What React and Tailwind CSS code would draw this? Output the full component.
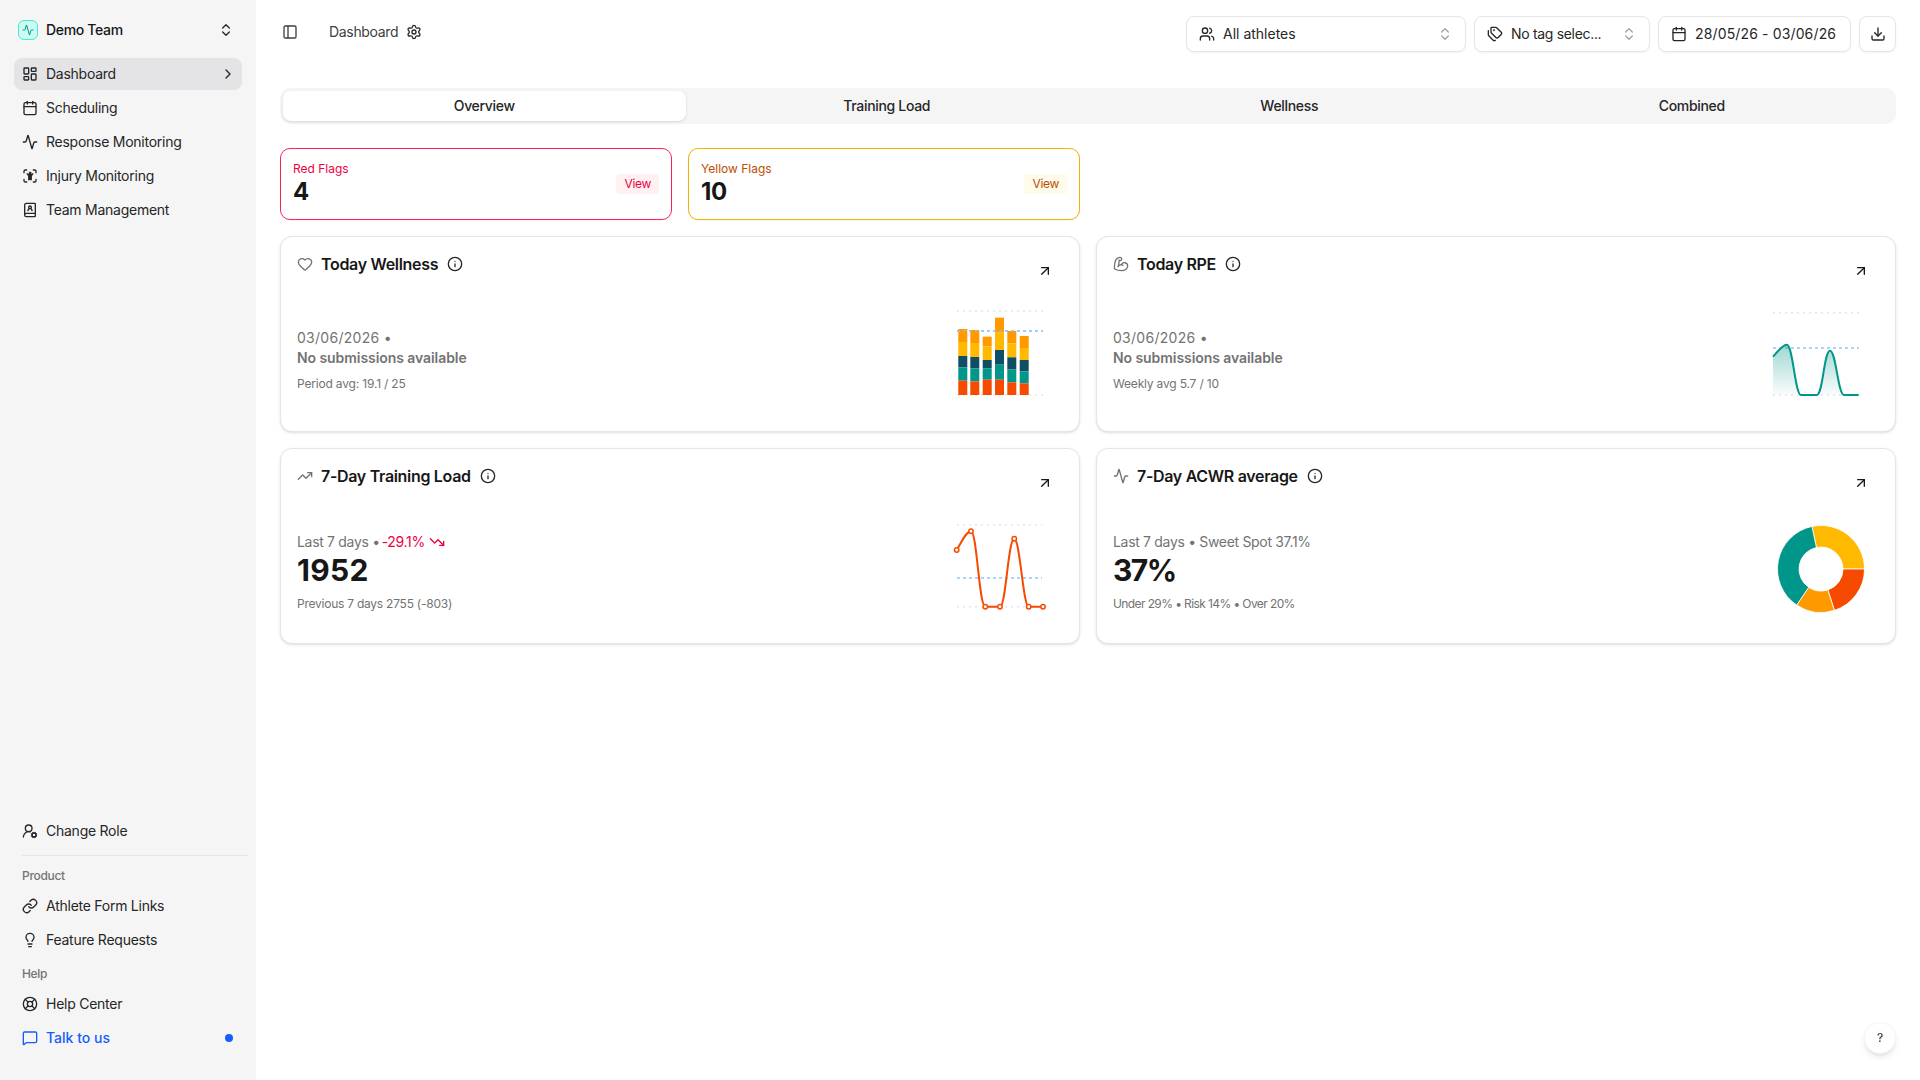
import {
  Activity, ArrowUpRight, BicepsFlexed, BookUser, Calendar, ChevronRight, ChevronsUpDown, Download, Heart, Info,
  LayoutDashboard, LifeBuoy, Lightbulb, Link, MessageSquare, PanelLeft, Settings, Tags, TrendingDown, TrendingUp,
  UserRoundCog, Users,
} from "lucide-react";

const bars = [
  { x: 958.3, ys: [597, 636, 678, 712, 752, 795] },
  { x: 970.3, ys: [600, 639, 681, 715, 754, 795] },
  { x: 982.7, ys: [620, 649, 690, 715, 749, 795] },
  { x: 995, ys: [563, 608, 660, 704, 749, 795] },
  { x: 1007.3, ys: [603, 640, 682, 718, 757, 795] },
  { x: 1019.7, ys: [618, 654, 690, 724, 760, 795] },
];
const barColors = ["#fe9a00", "#ffb900", "#104e64", "#009689", "#f54a00"];

function InjuryIcon({ className }) {
  return (
    <svg viewBox="0 0 24 24" fill="none" stroke="currentColor" strokeWidth="2" strokeLinecap="round" strokeLinejoin="round" className={className}>
      <path d="M3 7V5a2 2 0 0 1 2-2h2" />
      <path d="M17 3h2a2 2 0 0 1 2 2v2" />
      <path d="M21 17v2a2 2 0 0 1-2 2h-2" />
      <path d="M7 21H5a2 2 0 0 1-2-2v-2" />
      <circle cx="12" cy="7.5" r="1.6" fill="currentColor" strokeWidth="1" />
      <path d="M7.5 8.5 10 12v5.5h4V12l2.500-3.500" fill="currentColor" strokeWidth="1.6" />
    </svg>
  );
}

function Grid({ x1, x2, top, mid, bottom }) {
  return (
    <>
      <line x1={x1} x2={x2} y1={top} y2={top} stroke="#e5e5e5" strokeWidth="1.5" strokeDasharray="2 4" />
      <line x1={x1} x2={x2} y1={bottom} y2={bottom} stroke="#e5e5e5" strokeWidth="1.5" strokeDasharray="2 4" />
      <line x1={x1} x2={x2} y1={mid} y2={mid} stroke="#93c5fd" strokeWidth="1.7" strokeDasharray="3 3" />
    </>
  );
}

function BarsChart() {
  return (
    <svg viewBox="952 305 96 96" className="w-24 h-24 mr-[15px] shrink-0 overflow-visible">
      <Grid x1={957} x2={1043} top={311} mid={331} bottom={395} />
      {bars.map((b) =>
        barColors.map((c, i) => (
          <rect
            key={b.x + c}
            x={b.x}
            y={130 + b.ys[i] / 3}
            width="9"
            height={(b.ys[i + 1] - b.ys[i]) / 3}
            fill={c}
          />
        ))
      )}
      <line x1={957} x2={1043} y1={331} y2={331} stroke="#93c5fd" strokeWidth="1.7" strokeDasharray="3 3" opacity="0.7" />
    </svg>
  );
}

function RpeChart() {
  const line =
    "M1773 356.7 C1778 351 1783 344.7 1786.7 344.7 C1793 344.7 1795 395 1801 395 L1816.7 395 C1823 395 1824 350.7 1830 350.7 C1836 350.7 1838 395 1844 395 L1858.7 395";
  return (
    <svg viewBox="1768 305 96 96" className="w-24 h-24 mr-[15px] shrink-0 overflow-visible">
      <defs>
        <linearGradient id="rpe" x1="0" x2="0" y1="0" y2="1">
          <stop offset="0" stopColor="#009689" stopOpacity="0.38" />
          <stop offset="1" stopColor="#009689" stopOpacity="0.02" />
        </linearGradient>
      </defs>
      <Grid x1={1773} x2={1859} top={312.7} mid={348} bottom={395} />
      <path d={`${line} L1773 395 Z`} fill="url(#rpe)" />
      <path d={line} fill="none" stroke="#009689" strokeWidth="2" />
    </svg>
  );
}

function LoadChart() {
  const pts = [[956.7, 550], [971, 531.3], [985.3, 606.7], [1000, 606.7], [1014.3, 538.7], [1028.7, 606.7], [1043, 606.7]];
  return (
    <svg viewBox="952 517 96 96" className="w-24 h-24 mr-[15px] shrink-0 overflow-visible">
      <Grid x1={957} x2={1042} top={524.7} mid={578} bottom={606.7} />
      <path
        d="M956.7 550 C961 543 966 531.3 971 531.3 C977 531.3 979 606.7 985.3 606.7 L1000 606.7 C1006 606.7 1008 538.7 1014.3 538.7 C1020 538.7 1023 606.7 1028.7 606.7 L1043 606.7"
        fill="none"
        stroke="#f54a00"
        strokeWidth="2"
      />
      {pts.map(([x, y]) => (
        <circle key={x} cx={x} cy={y} r="2.2" fill="#fff" stroke="#f54a00" strokeWidth="1.5" />
      ))}
    </svg>
  );
}

function arc(a0, a1) {
  const cx = 1821, cy = 569, R = 43.5, r = 22;
  const p = (rad, a) => {
    const t = ((a - 90) * Math.PI) / 180;
    return `${(cx + rad * Math.cos(t)).toFixed(2)} ${(cy + rad * Math.sin(t)).toFixed(2)}`;
  };
  const large = a1 - a0 > 180 ? 1 : 0;
  return `M${p(R, a0)} A${R} ${R} 0 ${large} 1 ${p(R, a1)} L${p(r, a1)} A${r} ${r} 0 ${large} 0 ${p(r, a0)} Z`;
}

function Donut() {
  const slices = [
    [-12, 90, "#ffb900"],
    [90, 162, "#f54a00"],
    [162, 214, "#fe9a00"],
    [214, 348, "#009689"],
  ];
  return (
    <svg viewBox="1768 517 96 96" className="w-24 h-24 mr-[15px] shrink-0 overflow-visible">
      {slices.map(([a, b, c]) => (
        <path key={c} d={arc(a, b)} fill={c} stroke="#fff" strokeWidth="0.8" />
      ))}
    </svg>
  );
}

function NavItem({ icon: Icon, label, active, blue, children }) {
  return (
    <div
      className={`h-8 flex items-center gap-2 pl-2 pr-2 rounded-lg text-sm ${active ? "bg-zinc-200" : ""} ${
        blue ? "text-blue-600 font-medium tracking-normal" : "text-neutral-800 tracking-[-0.018em]"
      }`}
    >
      <Icon className="w-4 h-4 shrink-0" strokeWidth={2} />
      <span className="flex-1">{label}</span>
      {children}
    </div>
  );
}

function Sidebar() {
  return (
    <aside className="w-64 shrink-0 h-full bg-neutral-100 flex flex-col justify-between px-[14px] pt-[14px] pb-[26px]">
      <div>
        <div className="h-8 flex items-center gap-2 pl-1 pr-2 mb-3">
          <div className="w-5 h-5 rounded-md bg-teal-100 border border-teal-300 flex items-center justify-center">
            <Activity className="w-3 h-3 text-teal-600" />
          </div>
          <span className="flex-1 text-sm font-medium text-neutral-900">Demo Team</span>
          <ChevronsUpDown className="w-4 h-4 text-neutral-800" />
        </div>
        <nav className="flex flex-col gap-0.5">
          <NavItem icon={LayoutDashboard} label="Dashboard" active>
            <ChevronRight className="w-4 h-4 -mr-0.5 text-neutral-800" />
          </NavItem>
          <NavItem icon={Calendar} label="Scheduling" />
          <NavItem icon={Activity} label="Response Monitoring" />
          <NavItem icon={InjuryIcon} label="Injury Monitoring" />
          <NavItem icon={BookUser} label="Team Management" />
        </nav>
      </div>
      <div className="flex flex-col">
        <NavItem icon={UserRoundCog} label="Change Role" />
        <div className="border-t border-neutral-200 mt-2 ml-2 -mr-1.5" />
        <div className="h-[34px] pt-3 pl-2 text-xs font-medium text-neutral-500">Product</div>
        <div className="flex flex-col gap-0.5">
          <NavItem icon={Link} label="Athlete Form Links" />
          <NavItem icon={Lightbulb} label="Feature Requests" />
        </div>
        <div className="h-8 pt-2.5 pl-2 text-xs font-medium text-neutral-500">Help</div>
        <div className="flex flex-col gap-0.5">
          <NavItem icon={LifeBuoy} label="Help Center" />
          <NavItem icon={MessageSquare} label="Talk to us" blue>
            <span className="w-2 h-2 rounded-full bg-blue-600 mr-px" />
          </NavItem>
        </div>
      </div>
    </aside>
  );
}

function Picker({ icon: Icon, label, width, tracking = "", chevron = true }) {
  return (
    <button className={`h-9 ${width} flex items-center gap-2 px-3 bg-white border border-neutral-200 rounded-lg shadow-xs text-sm text-neutral-800`}>
      <Icon className="w-4 h-4 shrink-0" />
      <span className={`flex-1 text-left whitespace-nowrap ${tracking}`}>{label}</span>
      {chevron && <ChevronsUpDown className="w-4 h-4 text-neutral-400 shrink-0" />}
    </button>
  );
}

function Header() {
  return (
    <header className="h-[52px] flex items-start justify-between pt-4">
      <div className="flex items-center h-8 text-sm text-neutral-700">
        <PanelLeft className="w-4 h-4 ml-0.5 text-neutral-700" />
        <span className="ml-[31px]">Dashboard</span>
        <Settings className="w-4 h-4 ml-2 text-neutral-800" />
      </div>
      <div className="flex gap-2">
        <Picker icon={Users} label="All athletes" width="w-[280px]" tracking="tracking-normal" />
        <Picker icon={Tags} label="No tag selec..." width="w-[176px]" />
        <Picker icon={Calendar} label="28/05/26 - 03/06/26" width="w-[193px]" tracking="tracking-[0.01em]" chevron={false} />
        <button className="h-9 w-[37px] flex items-center justify-center bg-white border border-neutral-200 rounded-lg shadow-xs text-neutral-800">
          <Download className="w-4 h-4" />
        </button>
      </div>
    </header>
  );
}

function Tabs() {
  return (
    <div className="mt-9 h-9 bg-neutral-100 rounded-[10px] p-[3px] grid grid-cols-4 text-sm font-medium text-neutral-800">
      <div className="bg-white rounded-lg shadow-sm flex items-center justify-center">Overview</div>
      <div className="flex items-center justify-center">Training Load</div>
      <div className="flex items-center justify-center">Wellness</div>
      <div className="flex items-center justify-center">Combined</div>
    </div>
  );
}

function FlagCard({ label, value, border, text, badge }) {
  return (
    <div className={`h-[72px] bg-white border ${border} rounded-[10px] shadow-xs px-3 flex items-center justify-between`}>
      <div>
        <div className={`text-xs leading-4 tracking-normal -mt-px mb-px ${text}`}>{label}</div>
        <div className="text-2xl leading-7 font-bold text-neutral-900">{value}</div>
      </div>
      <span className={`h-5 px-2 rounded flex items-center text-xs ${text} ${badge}`}>View</span>
    </div>
  );
}

function Card({ icon: Icon, title, chart, children }) {
  return (
    <div className="h-[196px] bg-white border border-neutral-200 rounded-xl shadow-sm p-4 flex flex-col">
      <div className="h-[22px] flex items-center justify-between">
        <div className="flex items-center gap-2">
          <Icon className="w-4 h-4 text-neutral-500" />
          <span className="text-base font-semibold text-neutral-900">{title}</span>
          <Info className="w-4 h-4 ml-px text-neutral-800" />
        </div>
        <ArrowUpRight className="w-4 h-4 mt-3.5 mr-2.5 text-neutral-900" />
      </div>
      <div className="flex-1 mt-4 flex items-center justify-between">
        {children}
        {chart}
      </div>
    </div>
  );
}

function TodayText({ note }) {
  return (
    <div className="pt-[14px]">
      <div className="text-sm leading-5 tracking-[0.02em] text-neutral-500">03/06/2026 •</div>
      <div className="text-sm leading-5 font-semibold tracking-[-0.005em] text-neutral-500">No submissions available</div>
      <div className="mt-2 text-xs leading-4 tracking-[-0.015em] text-neutral-500">{note}</div>
    </div>
  );
}

function StatText({ top, value, note, noteTracking = "tracking-[-0.02em]" }) {
  return (
    <div className="pt-[14px]">
      <div className="text-sm leading-5 text-neutral-500 flex items-center gap-1">{top}</div>
      <div className="text-[30px] leading-9 font-bold text-neutral-900">{value}</div>
      <div className={`mt-2 mb-px text-xs leading-4 text-neutral-500 ${noteTracking}`}>{note}</div>
    </div>
  );
}

export default function App() {
  return (
    <div className="h-screen flex overflow-hidden bg-white font-['Inter',sans-serif] tracking-[-0.02em]">
      <Sidebar />
      <main className="flex-1 px-6">
        <Header />
        <Tabs />
        <div className="mt-6 grid grid-cols-4 gap-4">
          <FlagCard label="Red Flags" value="4" border="border-rose-500" text="text-rose-600" badge="bg-rose-50" />
          <FlagCard label="Yellow Flags" value="10" border="border-[#f5b000]" text="text-amber-700" badge="bg-amber-50" />
        </div>
        <div className="mt-4 grid grid-cols-2 gap-4">
          <Card icon={Heart} title="Today Wellness" chart={<BarsChart />}>
            <TodayText note="Period avg: 19.1 / 25" />
          </Card>
          <Card icon={BicepsFlexed} title="Today RPE" chart={<RpeChart />}>
            <TodayText note="Weekly avg 5.7 / 10" />
          </Card>
          <Card icon={TrendingUp} title="7-Day Training Load" chart={<LoadChart />}>
            <StatText
              top={
                <>
                  <span>Last 7 days •</span>
                  <span className="text-rose-600 -ml-0.5">-29.1%</span>
                  <TrendingDown className="w-4 h-4 text-rose-600" />
                </>
              }
              value={<span className="tracking-[0.01em]">1952</span>}
              note="Previous 7 days 2755 (-803)"
            />
          </Card>
          <Card icon={Activity} title="7-Day ACWR average" chart={<Donut />}>
            <StatText
              top="Last 7 days • Sweet Spot 37.1%"
              value={<span className="tracking-[-0.05em]">37%</span>}
              note="Under 29% • Risk 14% • Over 20%"
              noteTracking="tracking-[-0.05em]"
            />
          </Card>
        </div>
      </main>
      <button className="fixed right-6 bottom-[26px] w-8 h-8 rounded-full bg-white border border-neutral-100 shadow-md text-xs font-medium text-neutral-700">?</button>
    </div>
  );
}
